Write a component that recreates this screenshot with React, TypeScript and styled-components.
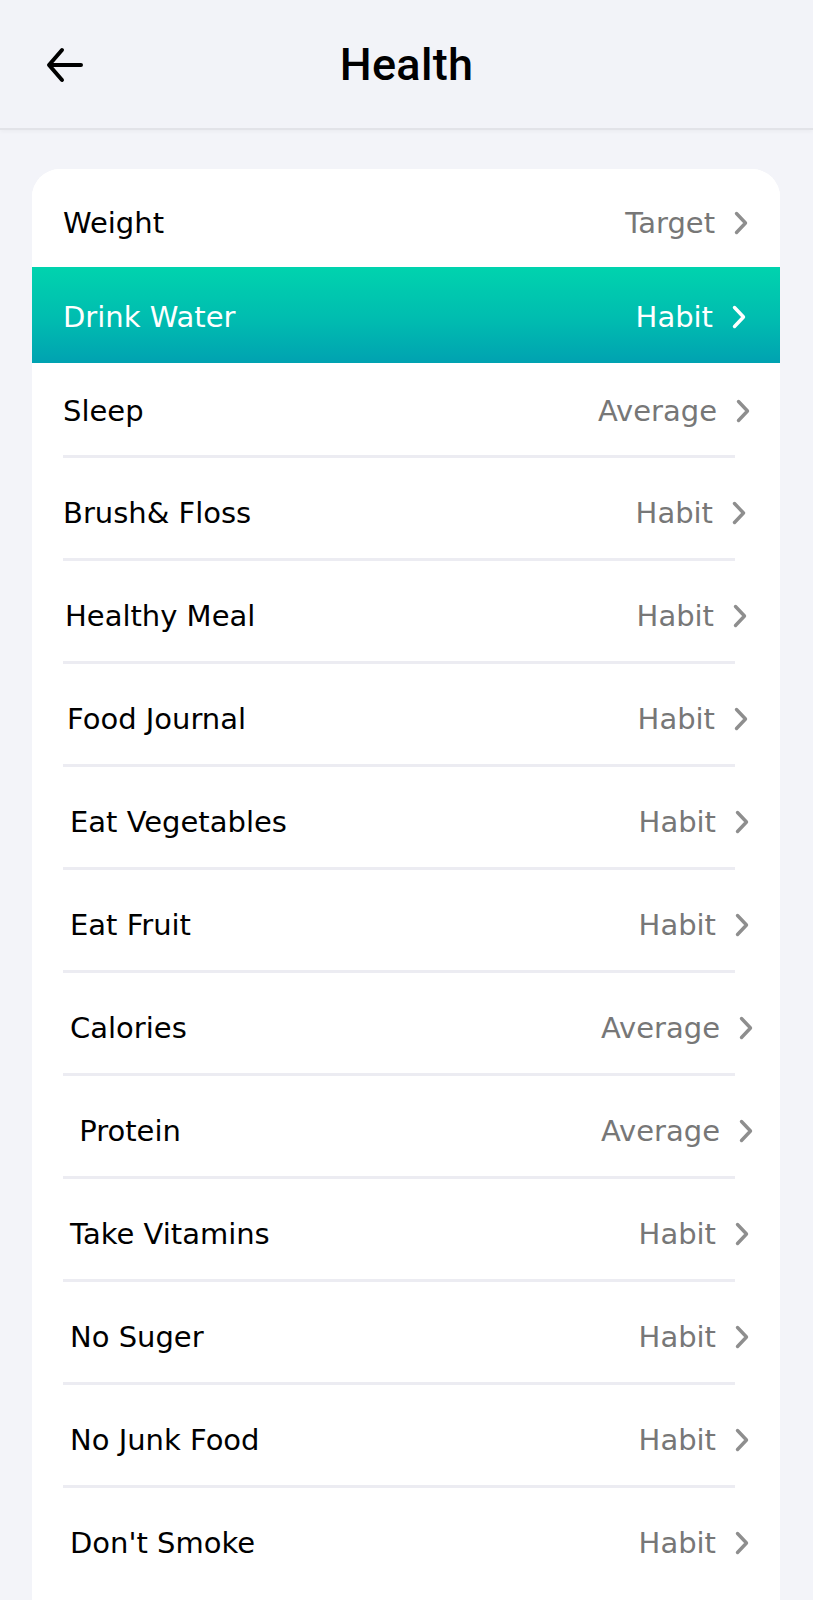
import React from 'react';
import styled, { createGlobalStyle } from 'styled-components';

const GlobalStyle = createGlobalStyle`
  body {
    margin: 0;
    background: #f3f4f9;
    font-family: "DejaVu Sans", sans-serif;
  }
`;

type Item = {
  label: string;
  kind: string;
  indent?: number;
  end?: number;
  active?: boolean;
  divider?: boolean;
  height?: number;
  top?: number;
};

const items: Item[] = [
  { label: 'Weight', kind: 'Target', end: 32, height: 98, top: 10 },
  { label: 'Drink Water', kind: 'Habit', active: true, height: 96, top: 4 },
  { label: 'Sleep', kind: 'Average', end: 30, divider: true, height: 92, top: 4 },
  { label: 'Brush& Floss', kind: 'Habit', divider: true },
  { label: 'Healthy Meal', kind: 'Habit', indent: 2, end: 33, divider: true },
  { label: 'Food Journal', kind: 'Habit', indent: 4, end: 32, divider: true },
  { label: 'Eat Vegetables', kind: 'Habit', indent: 7, end: 31, divider: true },
  { label: 'Eat Fruit', kind: 'Habit', indent: 7, end: 31, divider: true },
  { label: 'Calories', kind: 'Average', indent: 7, end: 27, divider: true },
  { label: ' Protein', kind: 'Average', indent: 7, end: 27, divider: true },
  { label: 'Take Vitamins', kind: 'Habit', indent: 7, end: 31, divider: true },
  { label: 'No Suger', kind: 'Habit', indent: 7, end: 31, divider: true },
  { label: 'No Junk Food', kind: 'Habit', indent: 7, end: 31, divider: true },
  { label: "Don't Smoke", kind: 'Habit', indent: 7, end: 31 },
];

const Page = styled.div`
  min-height: 100vh;
  background: #f3f4f9;
`;

const Header = styled.header`
  height: 128px;
  display: flex;
  align-items: center;
  justify-content: center;
  position: relative;
  background: #f2f3f8;
  border-bottom: 2px solid #e2e3e8;
  box-shadow: 0 2px 4px rgba(0, 0, 0, 0.03);
`;

const BackButton = styled.button`
  position: absolute;
  left: 44px;
  top: 46px;
  width: 40px;
  height: 38px;
  padding: 0;
  border: none;
  background: transparent;
  display: flex;
  align-items: center;
  justify-content: center;
`;

const Title = styled.h1`
  margin: 0;
  font-family: Roboto, "Liberation Sans", sans-serif;
  font-weight: 500;
  font-size: 45px;
  color: #000;
  letter-spacing: 0.3px;
`;

const Content = styled.main`
  padding: 39px 33px 0 32px;
`;

const Card = styled.section`
  background: #fff;
  border-radius: 28px 28px 0 0;
  overflow: hidden;
  padding-bottom: 80px;
`;

const Row = styled.div<{ $active?: boolean; $indent: number; $end: number; $h: number; $top: number }>`
  height: ${(p) => p.$h}px;
  display: flex;
  align-items: center;
  justify-content: space-between;
  padding: ${(p) => p.$top}px ${(p) => p.$end}px 0 ${(p) => 31 + p.$indent}px;
  box-sizing: border-box;
  background: ${(p) =>
    p.$active ? 'linear-gradient(180deg, #00d3ae 0%, #00bcb0 55%, #00a2b1 100%)' : '#fff'};
  color: ${(p) => (p.$active ? '#fff' : '#000')};
`;

const Divider = styled.div`
  height: 3px;
  margin: 0 45px 0 31px;
  background: #ececf2;
`;

const Label = styled.span`
  font-size: 29px;
  white-space: pre;
`;

const Trail = styled.span`
  display: flex;
  align-items: center;
  gap: 19px;
`;

const Kind = styled.span<{ $active?: boolean }>`
  font-size: 29px;
  color: ${(p) => (p.$active ? '#fff' : '#777')};
`;

const Chevron = ({ color }: { color: string }) => (
  <svg width="14" height="24" viewBox="0 0 14 24" fill="none">
    <polyline
      points="2.5,2.5 11.5,12 2.5,21.5"
      stroke={color}
      strokeWidth="3.4"
      strokeLinecap="round"
      strokeLinejoin="round"
    />
  </svg>
);

export default function App() {
  return (
    <Page>
      <GlobalStyle />
      <Header>
        <BackButton aria-label="Back">
          <svg width="38" height="36" viewBox="0 0 38 36" fill="none">
            <path
              d="M36 18H5M17 3L4 18l13 15"
              stroke="#000"
              strokeWidth="4"
              strokeLinecap="round"
              strokeLinejoin="round"
            />
          </svg>
        </BackButton>
        <Title>Health</Title>
      </Header>
      <Content>
        <Card>
          {items.map((it) => (
            <React.Fragment key={it.label}>
              <Row
                $active={it.active}
                $indent={it.indent ?? 0}
                $end={it.end ?? 34}
                $h={it.height ?? 100}
                $top={it.top ?? 10}
              >
                <Label>{it.label}</Label>
                <Trail>
                  <Kind $active={it.active}>{it.kind}</Kind>
                  <Chevron color={it.active ? '#fff' : '#8e8e8e'} />
                </Trail>
              </Row>
              {it.divider && <Divider />}
            </React.Fragment>
          ))}
        </Card>
      </Content>
    </Page>
  );
}
